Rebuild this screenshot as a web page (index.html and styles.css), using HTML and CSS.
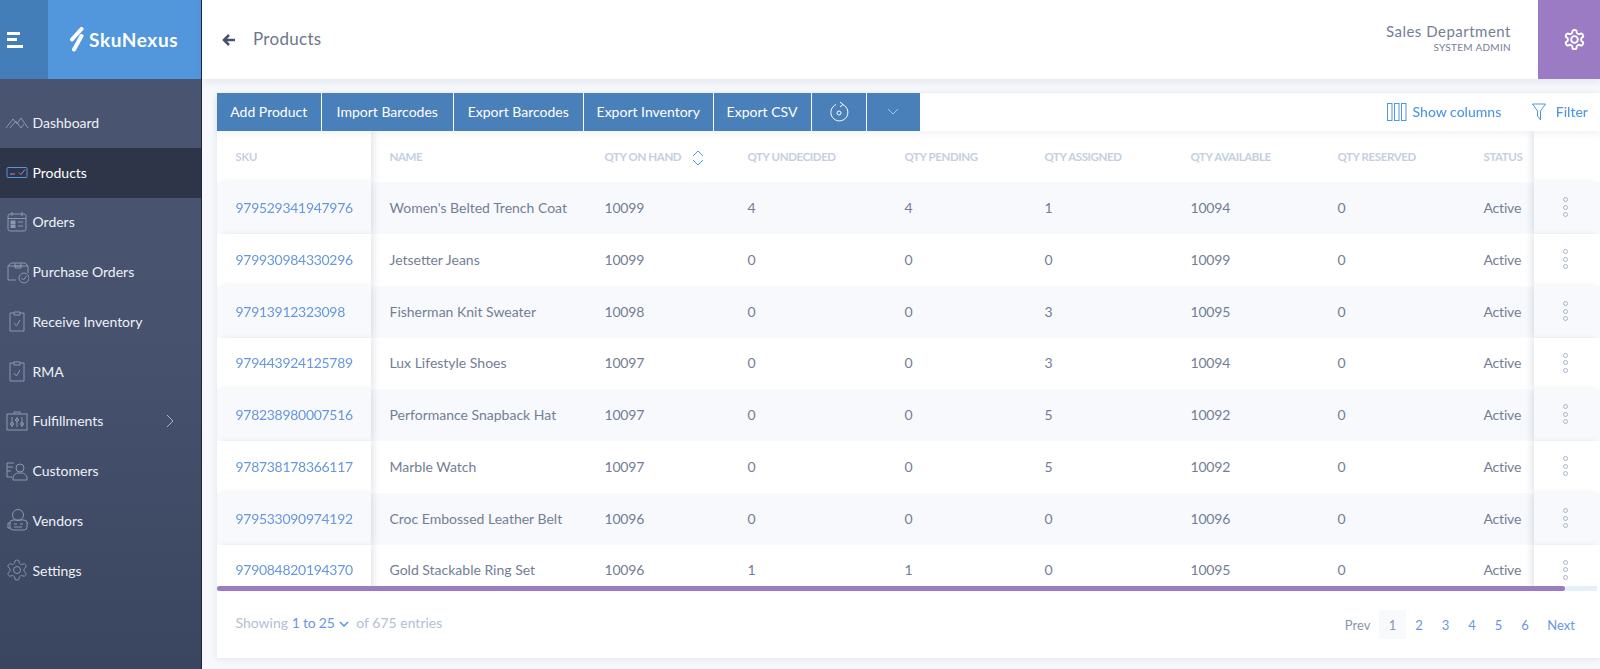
FILE: index.html
```html
<!DOCTYPE html>
<html lang="en">
<head>
<meta charset="utf-8">
<title>Products - SkuNexus</title>
<link rel="stylesheet" href="styles.css">
</head>
<body>
<div class="app">
  <aside class="sidebar">
    <div class="brand">
      <div class="burger"><span class="b1"></span><span class="b2"></span><span class="b3"></span></div>
      <div class="logo">
        <svg class="logo-mark" viewBox="0 0 15 26" width="15" height="26"><path d="M12.500 2 3 12.500M12.500 9 5 22.500" fill="none" stroke="#fff" stroke-width="4" stroke-linecap="round"/></svg>
        <span class="logo-text">SkuNexus</span>
      </div>
    </div>
    <nav class="nav">
      <a class="nav-item"><span class="nav-ico"><svg viewBox="0 0 24 24" width="24" height="24"><path d="M1 18 8 9l4 5 4-6 7 10M5 18l6-7 5 7 3-4" /></svg></span>Dashboard</a>
      <a class="nav-item active"><span class="nav-ico"><svg viewBox="0 0 24 24" width="24" height="24"><rect class="blue" x="2" y="7.500" width="20" height="10" rx="1"/><path class="purple" d="M5 14h5M14 12.500l2 2 4-5"/></svg></span>Products</a>
      <a class="nav-item"><span class="nav-ico"><svg viewBox="0 0 24 24" width="24" height="24"><rect x="3" y="4" width="18" height="17" rx="2"/><path d="M3 8.500h18M7 2v4M17 2v4M13 12h5M13 16h5"/><rect x="6" y="11" width="4" height="2.500" fill="#8c97ad"/><rect x="6" y="15" width="4" height="2.500" fill="#8c97ad"/></svg></span>Orders</a>
      <a class="nav-item"><span class="nav-ico"><svg viewBox="0 0 24 24" width="24" height="24"><path d="M11 20H3V6l3-3h14l3 3v7M3 6h20M10 6V3M16 6V3M10 6h6v2h-6z"/><circle cx="19" cy="18" r="5"/><path d="m16.500 18 2 2 3-4"/></svg></span>Purchase Orders</a>
      <a class="nav-item"><span class="nav-ico"><svg viewBox="0 0 24 24" width="24" height="24"><path d="M9 4H5v18h14V4h-4M9 3h6v3H9zM9 14l2.500 3L15 11"/></svg></span>Receive Inventory</a>
      <a class="nav-item"><span class="nav-ico"><svg viewBox="0 0 24 24" width="24" height="24"><path d="M9 4H5v18h14V4h-4M9 3h6v3H9zM9 14l2.500 3L15 11"/></svg></span>RMA</a>
      <a class="nav-item"><span class="nav-ico"><svg viewBox="0 0 24 24" width="24" height="24"><rect x="2" y="5" width="20" height="16"/><path d="M9 5V3h6v2M7 8v10M12 8v10M17 8v10"/><circle cx="7" cy="15" r="1.500"/><circle cx="12" cy="11" r="1.500"/><circle cx="17" cy="15" r="1.500"/></svg></span>Fulfillments<svg class="nav-caret" viewBox="0 0 8 14" width="8" height="14"><path d="m1 1 6 6-6 6"/></svg></a>
      <a class="nav-item"><span class="nav-ico"><svg viewBox="0 0 24 24" width="24" height="24"><path d="M9 4H2v14h5M2 8h6M2 12h4"/><circle cx="15" cy="9" r="4"/><path d="M8 21v-2c0-3 3-5 5-5h4c2 0 5 2 5 5v2z"/></svg></span>Customers</a>
      <a class="nav-item"><span class="nav-ico"><svg viewBox="0 0 24 24" width="24" height="24"><circle cx="13" cy="7" r="5.500"/><rect x="5" y="12" width="17" height="10" rx="3"/><path d="M5 15H3v5h2M22 15h1M9 16h3M15 16h3M9 19h8"/></svg></span>Vendors</a>
      <a class="nav-item"><span class="nav-ico"><svg viewBox="0 0 24 24" width="24" height="24"><path d="M12.220 2h-.44a2 2 0 0 0-2 2v.18a2 2 0 0 1-1 1.730l-.43.25a2 2 0 0 1-2 0l-.15-.08a2 2 0 0 0-2.730.73l-.22.38a2 2 0 0 0 .73 2.730l.15.1a2 2 0 0 1 1 1.720v.51a2 2 0 0 1-1 1.740l-.15.09a2 2 0 0 0-.73 2.730l.22.38a2 2 0 0 0 2.730.73l.15-.08a2 2 0 0 1 2 0l.43.25a2 2 0 0 1 1 1.730V20a2 2 0 0 0 2 2h.44a2 2 0 0 0 2-2v-.18a2 2 0 0 1 1-1.730l.43-.25a2 2 0 0 1 2 0l.15.08a2 2 0 0 0 2.730-.73l.22-.39a2 2 0 0 0-.73-2.730l-.15-.08a2 2 0 0 1-1-1.740v-.5a2 2 0 0 1 1-1.740l.15-.09a2 2 0 0 0 .73-2.730l-.22-.38a2 2 0 0 0-2.730-.73l-.15.08a2 2 0 0 1-2 0l-.43-.25a2 2 0 0 1-1-1.730V4a2 2 0 0 0-2-2z"/><circle cx="12" cy="12" r="3.500"/></svg></span>Settings</a>
    </nav>
  </aside>

  <div class="main">
    <header class="topbar">
      <svg class="back" viewBox="0 0 14 14" width="14" height="14"><path d="M7 2 2 7l5 5M2 7h11"/></svg>
      <h1 class="title">Products</h1>
      <div class="user">
        <div class="user-name">Sales Department</div>
        <div class="user-role">SYSTEM ADMIN</div>
      </div>
      <div class="gear">
        <svg viewBox="0 0 24 24" width="23" height="23"><path d="M12.220 2h-.44a2 2 0 0 0-2 2v.18a2 2 0 0 1-1 1.730l-.43.25a2 2 0 0 1-2 0l-.15-.08a2 2 0 0 0-2.730.73l-.22.38a2 2 0 0 0 .73 2.730l.15.1a2 2 0 0 1 1 1.720v.51a2 2 0 0 1-1 1.740l-.15.09a2 2 0 0 0-.73 2.730l.22.38a2 2 0 0 0 2.730.73l.15-.08a2 2 0 0 1 2 0l.43.25a2 2 0 0 1 1 1.730V20a2 2 0 0 0 2 2h.44a2 2 0 0 0 2-2v-.18a2 2 0 0 1 1-1.730l.43-.25a2 2 0 0 1 2 0l.15.08a2 2 0 0 0 2.730-.73l.22-.39a2 2 0 0 0-.73-2.730l-.15-.08a2 2 0 0 1-1-1.740v-.5a2 2 0 0 1 1-1.740l.15-.09a2 2 0 0 0 .73-2.730l-.22-.38a2 2 0 0 0-2.730-.73l-.15.08a2 2 0 0 1-2 0l-.43-.25a2 2 0 0 1-1-1.730V4a2 2 0 0 0-2-2z"/><circle cx="12" cy="12" r="3.500"/></svg>
      </div>
    </header>

    <section class="card">
      <div class="toolbar">
        <button class="btn w-add">Add Product</button>
        <button class="btn w-imp">Import Barcodes</button>
        <button class="btn w-exp">Export Barcodes</button>
        <button class="btn w-inv">Export Inventory</button>
        <button class="btn w-csv">Export CSV</button>
        <button class="btn w-ref" aria-label="Refresh"><svg viewBox="0 0 22 22" width="22" height="22"><path d="M14.500 3.500A8.500 8.500 0 1 1 8 3.600M12 1l3 2.500L12 6"/><circle cx="11" cy="12" r="2"/></svg></button>
        <button class="btn w-more" aria-label="More"><svg viewBox="0 0 12 8" width="12" height="8"><path d="m1 1 5 5 5-5"/></svg></button>
        <div class="tools">
          <a class="tool"><svg viewBox="0 0 20 18" width="20" height="18"><rect x=".5" y=".5" width="4.500" height="17"/><rect x="7.500" y=".5" width="4.500" height="17"/><rect x="14.500" y=".5" width="4.500" height="17"/></svg>Show columns</a>
          <a class="tool tool-filter"><svg viewBox="0 0 14 18" width="14" height="18"><path d="M.5 1h13L8.500 8v9l-3-4V8z"/></svg>Filter</a>
        </div>
      </div>

      <div class="table-wrap">
        <table class="grid">
          <colgroup>
            <col class="c1"><col class="c2"><col class="c3"><col class="c4"><col class="c5"><col class="c6"><col class="c7"><col class="c8"><col class="c9"><col class="c10">
          </colgroup>
          <thead>
            <tr>
              <th class="fix-l">SKU</th><th>Name</th>
              <th>Qty on hand<svg class="sort" viewBox="0 0 12 16" width="12" height="16"><path d="m1 6 5-5 5 5M1 10l5 5 5-5"/></svg></th>
              <th>Qty undecided</th><th>Qty pending</th><th>Qty assigned</th><th>Qty available</th><th>Qty reserved</th><th>Status</th><th class="fix-r"></th>
            </tr>
          </thead>
          <tbody>
            <tr><td class="fix-l"><a class="sku">979529341947976</a></td><td>Women's Belted Trench Coat</td><td>10099</td><td>4</td><td>4</td><td>1</td><td>10094</td><td>0</td><td>Active</td><td class="fix-r"><span class="kebab"><i></i><i></i><i></i></span></td></tr>
            <tr><td class="fix-l"><a class="sku">979930984330296</a></td><td>Jetsetter Jeans</td><td>10099</td><td>0</td><td>0</td><td>0</td><td>10099</td><td>0</td><td>Active</td><td class="fix-r"><span class="kebab"><i></i><i></i><i></i></span></td></tr>
            <tr><td class="fix-l"><a class="sku">97913912323098</a></td><td>Fisherman Knit Sweater</td><td>10098</td><td>0</td><td>0</td><td>3</td><td>10095</td><td>0</td><td>Active</td><td class="fix-r"><span class="kebab"><i></i><i></i><i></i></span></td></tr>
            <tr><td class="fix-l"><a class="sku">979443924125789</a></td><td>Lux Lifestyle Shoes</td><td>10097</td><td>0</td><td>0</td><td>3</td><td>10094</td><td>0</td><td>Active</td><td class="fix-r"><span class="kebab"><i></i><i></i><i></i></span></td></tr>
            <tr><td class="fix-l"><a class="sku">978238980007516</a></td><td>Performance Snapback Hat</td><td>10097</td><td>0</td><td>0</td><td>5</td><td>10092</td><td>0</td><td>Active</td><td class="fix-r"><span class="kebab"><i></i><i></i><i></i></span></td></tr>
            <tr><td class="fix-l"><a class="sku">978738178366117</a></td><td>Marble Watch</td><td>10097</td><td>0</td><td>0</td><td>5</td><td>10092</td><td>0</td><td>Active</td><td class="fix-r"><span class="kebab"><i></i><i></i><i></i></span></td></tr>
            <tr><td class="fix-l"><a class="sku">979533090974192</a></td><td>Croc Embossed Leather Belt</td><td>10096</td><td>0</td><td>0</td><td>0</td><td>10096</td><td>0</td><td>Active</td><td class="fix-r"><span class="kebab"><i></i><i></i><i></i></span></td></tr>
            <tr><td class="fix-l"><a class="sku">979084820194370</a></td><td>Gold Stackable Ring Set</td><td>10096</td><td>1</td><td>1</td><td>0</td><td>10095</td><td>0</td><td>Active</td><td class="fix-r"><span class="kebab"><i></i><i></i><i></i></span></td></tr>
          </tbody>
        </table>
        <div class="vthumb"></div>
      </div>
      <div class="hscroll"><div class="hthumb"></div></div>

      <footer class="foot">
        <div class="showing">Showing <a class="range">1 to 25<svg viewBox="0 0 10 6" width="10" height="6"><path d="m1 1 4 4 4-4"/></svg></a> of 675 entries</div>
        <div class="pager">
          <a class="pg prev">Prev</a><a class="pg cur">1</a><a class="pg">2</a><a class="pg">3</a><a class="pg">4</a><a class="pg">5</a><a class="pg">6</a><a class="pg next">Next</a>
        </div>
      </footer>
    </section>
  </div>
</div>
</body>
</html>
```
FILE: styles.css
```css
* { box-sizing: border-box; }
html, body { margin: 0; height: 669px; overflow: hidden; }
body { font-family: Lato, "Open Sans", sans-serif; font-size: 14px; color: #737e95; background: #f6f8fb; }
a { color: inherit; text-decoration: none; }
svg { fill: none; stroke: currentColor; stroke-width: 1; flex: none; }

.app { display: grid; grid-template-columns: 202px 1fr; height: 669px; }

.sidebar { background: linear-gradient(180deg, #4a5671 0%, #47536e 50%, #3a4560 100%); border-right: 1px solid #1b2740; color: #eef1f6; }
.brand { display: flex; height: 79px; }
.burger { width: 48px; background: #447eb8; display: flex; flex-direction: column; justify-content: center; gap: 3.500px; padding-left: 6.500px; }
.burger span { display: block; height: 3px; background: #fff; }
.b1 { width: 13.500px; }
.b2 { width: 10px; }
.b3 { width: 16px; }
.logo { flex: 1; background: #5296dc; display: flex; align-items: center; padding-left: 21px; gap: 5px; color: #fff; }
.logo-text { font-weight: 700; font-size: 19px; letter-spacing: .6px; }

.nav { padding-top: 19px; display: flex; flex-direction: column; }
.nav-item { display: flex; align-items: center; height: 49.750px; padding-left: 5px; padding-bottom: 1px; position: relative; font-size: 14px; }
.nav-item.active { background: #2e3548; color: #fff; }
.nav-ico { width: 27.500px; display: flex; color: #8c97ad; }
.blue { stroke: #5296dc; }
.purple { stroke: #a98bd6; }
.nav-caret { margin-left: auto; margin-right: 27px; color: #aab4c6; }

.main { display: flex; flex-direction: column; min-width: 0; }
.topbar { height: 79px; background: #fff; display: flex; align-items: center; padding-left: 20px; box-shadow: 0 2px 8px rgba(70,85,115,.12); position: relative; }
.back { color: #47536e; stroke-width: 2.600; }
.title { margin: 0 0 2px 17px; font-size: 17px; font-weight: 400; color: #6b768e; letter-spacing: .3px; }
.user { margin-left: auto; margin-right: 27px; padding-bottom: 6px; text-align: right; color: #737e95; }
.user-name { font-size: 15px; letter-spacing: .5px; line-height: 20px; }
.user-role { font-size: 10px; line-height: 12px; letter-spacing: .3px; }
.gear { width: 62px; height: 79px; background: #9b7bc4; display: flex; align-items: center; justify-content: center; padding-left: 10px; color: #fff; }
.gear svg { stroke-width: 2; }

.card { margin: 13.500px 0 0 14.500px; background: #fff; height: 565.500px; box-shadow: 0 1px 6px rgba(70,85,115,.12); display: flex; flex-direction: column; }

.toolbar { height: 38.500px; display: flex; align-items: stretch; box-shadow: 0 3px 6px rgba(70,85,115,.08); position: relative; z-index: 3; background: #fff; }
.btn { border: 0; border-right: 1px solid #fff; background: #4a80b9; color: #fff; font: inherit; font-size: 14px; padding: 0; display: flex; align-items: center; justify-content: center; }
.w-add { width: 105.500px; }
.w-imp { width: 131.500px; }
.w-exp { width: 130.500px; }
.w-inv { width: 129.500px; }
.w-csv { width: 98px; }
.w-ref { width: 55px; }
.w-more { width: 53.500px; border-right: 0; color: #a9c4e0; }
.tools { margin-left: auto; display: flex; align-items: center; padding-right: 12px; gap: 30.500px; color: #4f97e0; }
.tool { display: flex; align-items: center; gap: 6px; font-weight: 500; font-size: 14px; }
.tool-filter { gap: 10px; }

.table-wrap { height: 455px; overflow: hidden; position: relative; }
.grid { border-collapse: separate; border-spacing: 0; table-layout: fixed; width: 1383px; }
.c1 { width: 154px; }
.c2 { width: 215px; }
.c3 { width: 143px; }
.c4 { width: 157px; }
.c5 { width: 140px; }
.c6 { width: 146px; }
.c7 { width: 147px; }
.c8 { width: 146px; }
.c9 { width: 69px; }
.c10 { width: 66px; }
.grid th, .grid td { padding: 0 0 0 19px; text-align: left; white-space: nowrap; overflow: visible; }
.grid th { height: 51px; font-size: 11.500px; font-weight: 700; letter-spacing: -.4px; text-transform: uppercase; color: #c4cfdf; background: #fff; }
.grid td { height: 52px; padding-bottom: 2px; color: #737e95; font-size: 14px; background: #fff; }
.grid tbody tr:nth-child(4n) td { height: 51px; }
.grid td:nth-child(n+3) { letter-spacing: -.2px; }
.grid tbody tr:nth-child(odd) td { background: #f7f9fc; }
.fix-l { position: sticky; left: 0; z-index: 1; box-shadow: 4px 0 6px -1px rgba(70,85,115,.14); }
.fix-r { position: sticky; right: 0; z-index: 1; box-shadow: -4px 0 6px -1px rgba(70,85,115,.14); }
.sku { color: #6797de; font-size: 14px; letter-spacing: -.3px; }
.sort { color: #5296dc; margin: -4px 0 -4px 11px; vertical-align: middle; }
.kebab { display: flex; flex-direction: column; gap: 2.500px; margin-left: 10px; }
.kebab i { display: block; width: 5px; height: 5px; border: 1px solid #aab5c8; border-radius: 50%; }
.vthumb { position: absolute; top: 0; right: 0; width: 3px; height: 152px; background: #9b7bc4; }

.hscroll { height: 5px; background: #e6f0fb; margin-right: 3px; flex: none; }
.hthumb { width: 1348px; height: 5px; background: #9b7bc4; border-radius: 3px; }

.foot { flex: 1; display: flex; justify-content: space-between; padding: 19px 25px 0 19px; }
.showing { color: #b3bfd2; font-size: 14px; line-height: 26px; }
.range { color: #6797de; margin: 0 4px 0 0; letter-spacing: -.2px; }
.range svg { margin-left: 4px; vertical-align: middle; color: #5296dc; stroke-width: 1.500; }
.pager { display: flex; height: 29px; align-items: center; }
.pg { width: 26.500px; height: 29px; display: flex; align-items: center; justify-content: center; color: #6797de; font-size: 13px; }
.prev { width: auto; margin-right: 9px; color: #8a95aa; }
.next { width: auto; margin-left: 9px; }
.cur { background: #f7f9fc; color: #8a95aa; }
```
